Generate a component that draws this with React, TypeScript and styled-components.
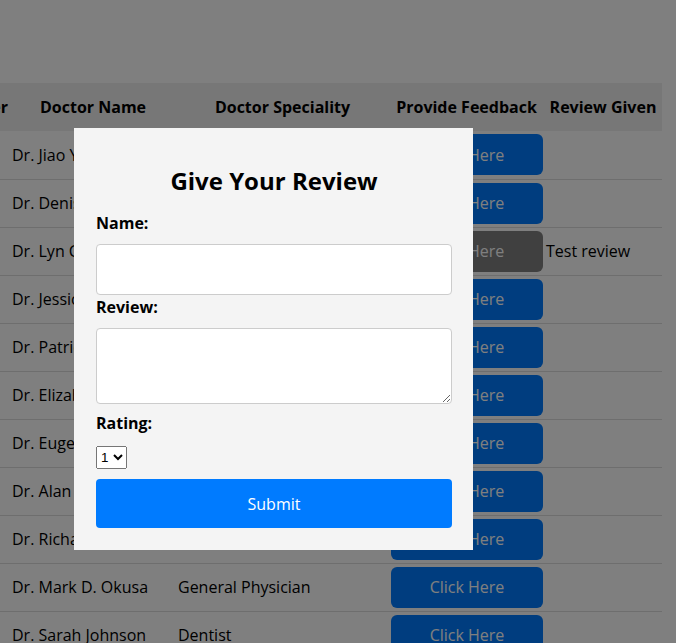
import React from "react";
import styled, { createGlobalStyle } from "styled-components";

const GlobalStyle = createGlobalStyle`
  html, body { margin: 0; padding: 0; background: #ffffff; }
  body { font-family: "Open Sans", "Liberation Sans", sans-serif; color: #000; }
  * { box-sizing: border-box; }
`;

const Page = styled.div`
  padding-top: 83px;
  width: 662px;
  overflow: hidden;
`;

const Table = styled.table`
  border-collapse: collapse;
  table-layout: fixed;
  width: 782px;
  margin-left: -120px;
`;

const HeadRow = styled.tr`
  background: #eeeeee;
  height: 48px;
`;

const Th = styled.th<{ $align?: string }>`
  font-size: 16px;
  font-weight: 700;
  padding: 2px;
  text-align: ${(p) => p.$align || "center"};
  white-space: nowrap;
  overflow: hidden;
`;

const Row = styled.tr`
  height: 48px;
  border-bottom: 1px solid #dddddd;
`;

const Td = styled.td`
  font-size: 16px;
  padding: 2px;
  white-space: nowrap;
  overflow: hidden;
  text-align: left;
`;

const ButtonCell = styled(Td)`
  text-align: center;
  padding: 3px 2px;
`;

const RowButton = styled.button<{ $done?: boolean }>`
  width: 152px;
  height: 41px;
  border: none;
  border-radius: 6px;
  background: ${(p) => (p.$done ? "#808080" : "#007bff")};
  color: #ffffff;
  font-family: inherit;
  font-size: 16px;
  cursor: pointer;
`;

const Overlay = styled.div`
  position: fixed;
  inset: 0;
  background: rgba(0, 0, 0, 0.5);
`;

const Modal = styled.div`
  position: absolute;
  top: 128px;
  left: 74px;
  width: 399px;
  padding: 0 21px 22px 22px;
  background: #f4f4f4;
  display: flex;
  flex-direction: column;
`;

const Title = styled.h2`
  margin: 37px 0 14px;
  font-size: 24px;
  line-height: 32px;
  font-weight: 700;
  text-align: center;
`;

const Label = styled.label<{ $gap: number }>`
  display: block;
  font-size: 16px;
  line-height: 24px;
  font-weight: 700;
  margin-bottom: ${(p) => p.$gap}px;
`;

const TextInput = styled.input`
  width: 356px;
  height: 51px;
  border: 1px solid #cccccc;
  border-radius: 4px;
  background: #fff;
  padding: 10px;
  font-family: inherit;
  font-size: 16px;
`;

const TextArea = styled.textarea`
  width: 356px;
  height: 76px;
  border: 1px solid #cccccc;
  border-radius: 4px;
  background: #fff;
  padding: 10px;
  font-family: inherit;
  font-size: 16px;
  margin-bottom: 7px;
  display: block;
`;

const Select = styled.select`
  align-self: flex-start;
  width: 31px;
  height: 23px;
  margin-bottom: 10px;
`;

const Submit = styled.button`
  width: 356px;
  height: 49px;
  border: none;
  border-radius: 4px;
  background: #007bff;
  color: #fff;
  font-family: inherit;
  font-size: 16px;
`;

const doctors = [
  { name: "Dr. Jiao Yang", spec: "Dentist" },
  { name: "Dr. Denis Raj", spec: "Dentist" },
  { name: "Dr. Lyn Christie", spec: "Gynecologist", review: "Test review" },
  { name: "Dr. Jessica White", spec: "Dermatologist" },
  { name: "Dr. Patricia Lee", spec: "Dermatologist" },
  { name: "Dr. Elizabeth Jones", spec: "General Physician" },
  { name: "Dr. Eugene Wells", spec: "ENT Specialist" },
  { name: "Dr. Alan Dalkin", spec: "General Physician" },
  { name: "Dr. Richard Pearson", spec: "Homeopath" },
  { name: "Dr. Mark D. Okusa", spec: "General Physician" },
  { name: "Dr. Sarah Johnson", spec: "Dentist" },
];

export default function App() {
  return (
    <>
      <GlobalStyle />
      <Page>
        <Table>
          <colgroup>
            <col style={{ width: 130 }} />
            <col style={{ width: 166 }} />
            <col style={{ width: 213 }} />
            <col style={{ width: 155 }} />
            <col style={{ width: 118 }} />
          </colgroup>
          <thead>
            <HeadRow>
              <Th $align="right">Serial Number</Th>
              <Th>Doctor Name</Th>
              <Th>Doctor Speciality</Th>
              <Th>Provide Feedback</Th>
              <Th>Review Given</Th>
            </HeadRow>
          </thead>
          <tbody>
            {doctors.map((d, i) => (
              <Row key={d.name}>
                <Td>{i + 1}</Td>
                <Td>{d.name}</Td>
                <Td>{d.spec}</Td>
                <ButtonCell>
                  <RowButton $done={!!d.review}>Click Here</RowButton>
                </ButtonCell>
                <Td>{d.review || ""}</Td>
              </Row>
            ))}
          </tbody>
        </Table>
      </Page>
      <Overlay>
        <Modal>
          <Title>Give Your Review</Title>
          <Label htmlFor="name" $gap={9}>Name:</Label>
          <TextInput id="name" type="text" />
          <Label htmlFor="review" $gap={9}>Review:</Label>
          <TextArea id="review" />
          <Label htmlFor="rating" $gap={11}>Rating:</Label>
          <Select id="rating" defaultValue="1">
            <option value="1">1</option>
            <option value="2">2</option>
            <option value="3">3</option>
            <option value="4">4</option>
            <option value="5">5</option>
          </Select>
          <Submit type="button">Submit</Submit>
        </Modal>
      </Overlay>
    </>
  );
}
